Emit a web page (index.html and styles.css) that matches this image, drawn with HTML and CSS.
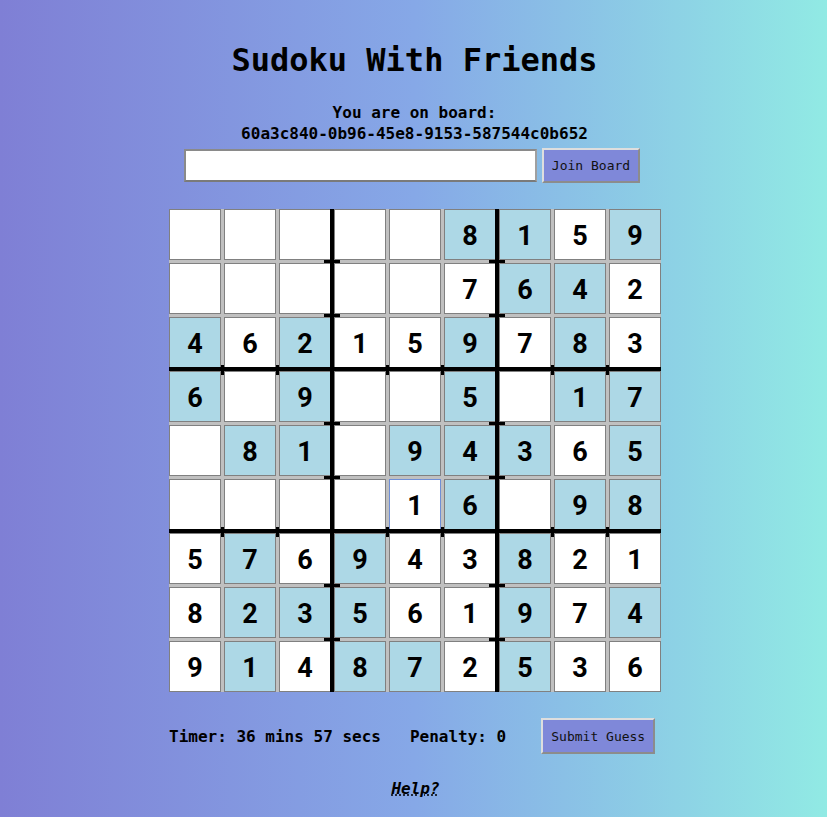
FILE: index.html
```html
<!DOCTYPE html>
<html lang="en">
<head>
<meta charset="utf-8">
<title>Sudoku With Friends</title>
<link rel="stylesheet" href="styles.css">
</head>
<body>
<main class="app">
  <h1 class="title">Sudoku With Friends</h1>
  <p class="board-info">You are on board:<br>60a3c840-0b96-45e8-9153-587544c0b652</p>
  <div class="join-row">
    <input class="board-input" type="text" aria-label="Board id">
    <button class="btn btn-join">Join Board</button>
  </div>

  <div class="board">
    <div class="cell"></div><div class="cell"></div><div class="cell"></div><div class="cell"></div><div class="cell"></div><div class="cell given">8</div><div class="cell given">1</div><div class="cell">5</div><div class="cell given">9</div>
    <div class="cell"></div><div class="cell"></div><div class="cell"></div><div class="cell"></div><div class="cell"></div><div class="cell">7</div><div class="cell given">6</div><div class="cell given">4</div><div class="cell">2</div>
    <div class="cell given">4</div><div class="cell">6</div><div class="cell given">2</div><div class="cell">1</div><div class="cell">5</div><div class="cell given">9</div><div class="cell">7</div><div class="cell given">8</div><div class="cell">3</div>
    <div class="cell given">6</div><div class="cell"></div><div class="cell given">9</div><div class="cell"></div><div class="cell"></div><div class="cell given">5</div><div class="cell"></div><div class="cell given">1</div><div class="cell given">7</div>
    <div class="cell"></div><div class="cell given">8</div><div class="cell given">1</div><div class="cell"></div><div class="cell given">9</div><div class="cell given">4</div><div class="cell given">3</div><div class="cell">6</div><div class="cell given">5</div>
    <div class="cell"></div><div class="cell"></div><div class="cell"></div><div class="cell"></div><div class="cell selected">1</div><div class="cell given">6</div><div class="cell"></div><div class="cell given">9</div><div class="cell given">8</div>
    <div class="cell">5</div><div class="cell given">7</div><div class="cell">6</div><div class="cell given">9</div><div class="cell">4</div><div class="cell">3</div><div class="cell given">8</div><div class="cell">2</div><div class="cell">1</div>
    <div class="cell">8</div><div class="cell given">2</div><div class="cell given">3</div><div class="cell given">5</div><div class="cell">6</div><div class="cell">1</div><div class="cell given">9</div><div class="cell">7</div><div class="cell given">4</div>
    <div class="cell">9</div><div class="cell given">1</div><div class="cell">4</div><div class="cell given">8</div><div class="cell given">7</div><div class="cell">2</div><div class="cell given">5</div><div class="cell">3</div><div class="cell">6</div>

    <span class="vline v1"></span><span class="vline v2"></span>
    <span class="hline h1"></span><span class="hline h2"></span>

    <span class="htick" style="left:155px;top:51px"></span>
    <span class="htick" style="left:155px;top:105px"></span>
    <span class="htick" style="left:155px;top:213px"></span>
    <span class="htick" style="left:155px;top:267px"></span>
    <span class="htick" style="left:155px;top:375px"></span>
    <span class="htick" style="left:155px;top:429px"></span>
    <span class="htick" style="left:320px;top:51px"></span>
    <span class="htick" style="left:320px;top:105px"></span>
    <span class="htick" style="left:320px;top:213px"></span>
    <span class="htick" style="left:320px;top:267px"></span>
    <span class="htick" style="left:320px;top:375px"></span>
    <span class="htick" style="left:320px;top:429px"></span>

    <span class="vtick" style="left:52px;top:156px"></span>
    <span class="vtick" style="left:107px;top:156px"></span>
    <span class="vtick" style="left:217px;top:156px"></span>
    <span class="vtick" style="left:272px;top:156px"></span>
    <span class="vtick" style="left:382px;top:156px"></span>
    <span class="vtick" style="left:437px;top:156px"></span>
    <span class="vtick" style="left:52px;top:318px"></span>
    <span class="vtick" style="left:107px;top:318px"></span>
    <span class="vtick" style="left:217px;top:318px"></span>
    <span class="vtick" style="left:272px;top:318px"></span>
    <span class="vtick" style="left:382px;top:318px"></span>
    <span class="vtick" style="left:437px;top:318px"></span>
  </div>

  <div class="status-row">
    <span class="timer">Timer: 36 mins 57 secs</span>
    <span class="penalty">Penalty: 0</span>
    <button class="btn btn-submit">Submit Guess</button>
  </div>

  <p class="help"><a class="help-link" href="#">Help?</a></p>
</main>
</body>
</html>
```

FILE: styles.css
```css
html, body {
  margin: 0;
  padding: 0;
}

body {
  min-height: 100vh;
  background: linear-gradient(to right, #7f7fd5, #86a8e7, #91eae4);
  font-family: "DejaVu Sans Mono", "Liberation Mono", monospace;
  color: #000;
}

.app {
  display: flex;
  flex-direction: column;
  align-items: center;
  padding-top: 41px;
}

.title {
  margin: 0 0 0 2px;
  font-size: 32px;
  line-height: 38px;
  font-weight: bold;
}

.board-info {
  margin: 23px 0 0 2px;
  font-size: 16px;
  line-height: 21px;
  font-weight: bold;
  text-align: center;
}

.join-row {
  margin: 4px 3px 0 0;
  display: flex;
  align-items: center;
  gap: 5px;
}

.board-input {
  box-sizing: border-box;
  width: 353px;
  height: 33px;
  margin: 0;
  padding: 2px 6px;
  background: #fff;
  border: 2px solid #8a8a8a;
  border-right-color: #a0a0a0;
  border-bottom-color: #7a7a7a;
  font-size: 16px;
  font-family: inherit;
}

.btn {
  box-sizing: border-box;
  margin: 0;
  padding: 0;
  background: #7f88d9;
  border: 2px solid;
  border-color: #dedede #8c8c8c #8c8c8c #dedede;
  font-family: "DejaVu Sans Mono", "Liberation Mono", monospace;
  font-size: 13px;
  color: #111;
  cursor: pointer;
}

.btn-join {
  width: 98px;
  height: 35px;
}

.board {
  position: relative;
  margin-top: 26px;
  margin-left: 3px;
  display: grid;
  grid-template-columns: repeat(9, 52px);
  grid-template-rows: repeat(9, 51px);
  column-gap: 3px;
  row-gap: 3px;
  background: #c0c0c0;
}

.cell {
  box-sizing: border-box;
  display: flex;
  align-items: center;
  justify-content: center;
  padding-top: 3px;
  background: #fff;
  border: 1px solid #808080;
  font-family: Roboto, "Noto Sans", sans-serif;
  font-weight: bold;
  font-size: 27px;
}

.cell.given {
  background: #add8e6;
}

.cell.selected {
  border-color: #6f8fd6;
}

.vline {
  position: absolute;
  top: 0;
  bottom: 0;
  width: 4px;
  background: #000;
}

.v1 { left: 161px; }
.v2 { left: 326px; }

.hline {
  position: absolute;
  left: 0;
  right: 0;
  height: 4px;
  background: #000;
}

.h1 { top: 158px; }
.h2 { top: 320px; }

.htick {
  position: absolute;
  width: 16px;
  height: 3px;
  background: #000;
}

.vtick {
  position: absolute;
  width: 3px;
  height: 10px;
  background: #000;
}

.status-row {
  margin-top: 26px;
  margin-left: 3px;
  width: 492px;
  display: flex;
  align-items: center;
  font-size: 16px;
  font-weight: bold;
}

.penalty {
  margin-left: 29px;
}

.btn-submit {
  margin-left: 35px;
  width: 114px;
  height: 36px;
}

.help {
  margin: 24px 0 0 4px;
  font-size: 16px;
  line-height: 21px;
  font-weight: bold;
  font-style: italic;
}

.help-link {
  color: #000;
  text-decoration: underline dotted;
}
```
